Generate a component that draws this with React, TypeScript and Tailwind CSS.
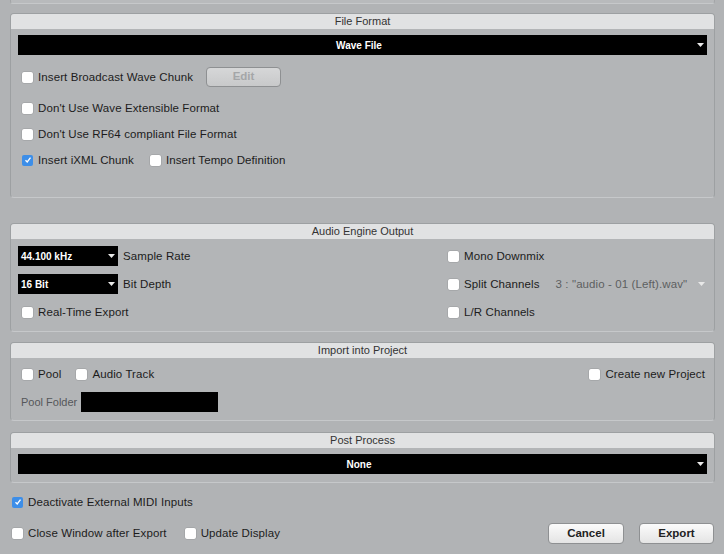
import React from "react";

function Check({ checked = false }: { checked?: boolean }) {
  if (checked) {
    return (
      <span className="flex h-[11px] w-[11px] shrink-0 items-center justify-center rounded-[2px] bg-[#3d8ee8]">
        <svg width="8" height="8" viewBox="0 0 8 8">
          <path d="M1.5 4.2 L3.2 6 L6.5 1.6" fill="none" stroke="white" strokeWidth="1.3" />
        </svg>
      </span>
    );
  }
  return <span className="h-[11px] w-[11px] shrink-0 rounded-[2px] bg-white shadow-[0_0_0_0.5px_#9a9c9e]" />;
}

function Opt({ label, checked, className = "" }: { label: string; checked?: boolean; className?: string }) {
  return (
    <div className={`flex items-center gap-[5px] ${className}`}>
      <Check checked={checked} />
      <span className="whitespace-nowrap pt-px">{label}</span>
    </div>
  );
}

function Arrow() {
  return (
    <svg width="7" height="4" viewBox="0 0 7 4" className="shrink-0">
      <path d="M0 0 H7 L3.5 4 Z" fill="#e8e8e8" />
    </svg>
  );
}

function Dropdown({ value, className = "", center = false }: { value: string; className?: string; center?: boolean }) {
  return (
    <div className={`flex h-[20px] items-center bg-black pl-[3px] pr-[3px] text-[10px] font-bold tracking-normal text-white ${className}`}>
      <span className={`flex-1 ${center ? "text-center" : ""}`}>{value}</span>
      <Arrow />
    </div>
  );
}

function Panel({ title, className = "", children }: { title: string; className?: string; children?: React.ReactNode }) {
  return (
    <div className={`ml-[10px] flex w-[705px] flex-col rounded-[4px] border border-[#9da0a2] border-b-[#c6c8ca] bg-[#b3b5b7] ${className}`}>
      <div className="h-[15px] shrink-0 rounded-t-[3px] bg-[#e1e2e3] text-center text-[11px] leading-[15px] tracking-normal text-[#333]">{title}</div>
      {children}
    </div>
  );
}

function Button({ label, disabled = false, className = "" }: { label: string; disabled?: boolean; className?: string }) {
  return (
    <div
      className={`flex items-center justify-center rounded-[4px] border border-[#8e9092] bg-gradient-to-b font-bold tracking-normal ${
        disabled ? "from-[#d6d7d8] to-[#c8c9ca] text-[#a4a6a8]" : "from-[#fbfbfb] to-[#e4e4e4] text-[#222]"
      } ${className}`}
    >
      {label}
    </div>
  );
}

export default function App() {
  return (
    <div className="h-[554px] w-[724px] overflow-hidden bg-[#b1b3b5] text-[11.5px] tracking-[0.1px] text-[#1c1c1c] [font-family:'Liberation_Sans',Arial,sans-serif]">
      <div className="ml-[10px] h-[4px] w-[705px] rounded-b-[3px] border border-t-0 border-[#a3a5a7] border-b-[#c6c8ca] bg-[#b8babc]" />

      <Panel title="File Format" className="mt-[9px] h-[185px]">
        <div className="flex flex-col pl-[7px] pr-[7px]">
          <Dropdown value="Wave File" center className="mt-[6px]" />
          <div className="mt-[12px] flex h-[20px] items-center">
            <Opt label="Insert Broadcast Wave Chunk" className="ml-[4px]" />
            <Button label="Edit" disabled className="ml-[13px] h-[20px] w-[75px]" />
          </div>
          <Opt label="Don't Use Wave Extensible Format" className="ml-[4px] mt-[13px] h-[16px]" />
          <Opt label="Don't Use RF64 compliant File Format" className="ml-[4px] mt-[10px] h-[16px]" />
          <div className="ml-[4px] mt-[10px] flex h-[16px] items-center gap-[16px]">
            <Opt label="Insert iXML Chunk" checked />
            <Opt label="Insert Tempo Definition" />
          </div>
        </div>
      </Panel>

      <Panel title="Audio Engine Output" className="mt-[25px] h-[109px]">
        <div className="mt-[7px] flex pl-[7px]">
          <div className="flex w-[430px] flex-col gap-[8px]">
            <div className="flex h-[20px] items-center gap-[5px]">
              <Dropdown value="44.100 kHz" className="w-[100px]" />
              <span className="pt-px">Sample Rate</span>
            </div>
            <div className="flex h-[20px] items-center gap-[5px]">
              <Dropdown value="16 Bit" className="w-[100px]" />
              <span className="pt-px">Bit Depth</span>
            </div>
            <Opt label="Real-Time Export" className="ml-[4px] h-[20px]" />
          </div>
          <div className="flex flex-1 flex-col gap-[8px] pr-[9px]">
            <Opt label="Mono Downmix" className="h-[20px]" />
            <div className="flex h-[20px] items-center">
              <Opt label="Split Channels" />
              <span className="ml-[16px] flex-1 whitespace-nowrap pt-px text-[#5d5f61]">3 : "audio - 01 (Left).wav"</span>
              <Arrow />
            </div>
            <Opt label="L/R Channels" className="h-[20px]" />
          </div>
        </div>
      </Panel>

      <Panel title="Import into Project" className="mt-[10px] h-[79px]">
        <div className="mt-[6px] flex h-[20px] items-center pl-[11px] pr-[9px]">
          <Opt label="Pool" />
          <Opt label="Audio Track" className="ml-[15px]" />
          <Opt label="Create new Project" className="ml-auto" />
        </div>
        <div className="mt-[8px] flex h-[20px] items-center pl-[10px]">
          <span className="pt-px text-[11px] tracking-normal text-[#55575a]">Pool Folder</span>
          <div className="ml-[4px] h-[20px] w-[137px] bg-black" />
        </div>
      </Panel>

      <Panel title="Post Process" className="mt-[11px] h-[51px]">
        <div className="px-[7px]">
          <Dropdown value="None" center className="mt-[6px]" />
        </div>
      </Panel>

      <Opt label="Deactivate External MIDI Inputs" checked className="ml-[12px] mt-[9px] h-[20px]" />

      <div className="mt-[11px] flex h-[21px] items-center pl-[12px] pr-[10px]">
        <Opt label="Close Window after Export" />
        <Opt label="Update Display" className="ml-[18px]" />
        <Button label="Cancel" className="ml-auto h-[21px] w-[76px]" />
        <Button label="Export" className="ml-[15px] h-[21px] w-[75px]" />
      </div>
    </div>
  );
}
